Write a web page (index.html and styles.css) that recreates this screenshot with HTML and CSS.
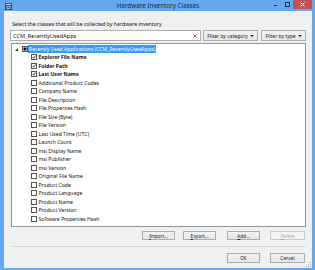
FILE: index.html
```html
<!DOCTYPE html>
<html>
<head>
<meta charset="utf-8">
<link rel="stylesheet" href="styles.css">
</head>
<body>
<div class="window">
  <div class="titlebar">
    <div class="tb-left">
      <svg class="appicon" width="7" height="7" viewBox="0 0 7 7"><rect x="0" y="0" width="7" height="7" fill="#2d4a86"/><rect x="1" y="1" width="5" height="1" fill="#cfe0ff"/><rect x="1.5" y="3" width="4" height="3" fill="#9fb8e8"/><rect x="2.5" y="4" width="2" height="1" fill="#2d4a86"/></svg>
    </div>
    <div class="title">Hardware Inventory Classes</div>
    <div class="controls">
      <span class="ctl min"><span class="min-bar"></span></span>
      <span class="ctl max"><span class="max-box"></span></span>
      <span class="ctl close"><svg width="5" height="5" viewBox="0 0 5 5"><path d="M0.5 0.5 L4.5 4.5 M4.5 0.5 L0.5 4.5" stroke="#fff" stroke-width="1"/></svg></span>
    </div>
  </div>
  <div class="content">
    <div class="prompt">Select the classes that will be collected by hardware inventory</div>
    <div class="searchrow">
      <div class="search">
        <span class="search-text">CCM_RecentlyUsedApps</span>
        <svg class="clear" width="4" height="4" viewBox="0 0 4 4"><path d="M0.3 0.3 L3.7 3.7 M3.7 0.3 L0.3 3.7" stroke="#d9302c" stroke-width="0.9"/></svg>
      </div>
      <div class="btn filter cat">Filter by category <span class="caret"></span></div>
      <div class="btn filter typ">Filter by type <span class="caret"></span></div>
    </div>
    <div class="tree">
      <div class="row root">
        <svg class="expander" width="3" height="3" viewBox="0 0 3 3"><polygon points="3,0 3,3 0,3" fill="#3c3c3c"/></svg>
        <span class="cb indet"></span>
        <span class="root-label">Recently Used Applications (CCM_RecentlyUsedApps)</span>
      </div>
      <div class="children">
        <div class="row child on"><span class="cb checked"><svg width="4" height="4" viewBox="0 0 4 4"><path d="M0.5 2 L1.6 3.2 L3.6 0.6" stroke="#222" stroke-width="0.9" fill="none"/></svg></span><span class="lbl">Explorer File Name</span></div>
        <div class="row child on"><span class="cb checked"><svg width="4" height="4" viewBox="0 0 4 4"><path d="M0.5 2 L1.6 3.2 L3.6 0.6" stroke="#222" stroke-width="0.9" fill="none"/></svg></span><span class="lbl">Folder Path</span></div>
        <div class="row child on"><span class="cb checked"><svg width="4" height="4" viewBox="0 0 4 4"><path d="M0.5 2 L1.6 3.2 L3.6 0.6" stroke="#222" stroke-width="0.9" fill="none"/></svg></span><span class="lbl">Last User Name</span></div>
        <div class="row child"><span class="cb"></span><span class="lbl">Additional Product Codes</span></div>
        <div class="row child"><span class="cb"></span><span class="lbl">Company Name</span></div>
        <div class="row child"><span class="cb"></span><span class="lbl">File Description</span></div>
        <div class="row child"><span class="cb"></span><span class="lbl">File Properties Hash</span></div>
        <div class="row child"><span class="cb"></span><span class="lbl">File Size (Byte)</span></div>
        <div class="row child"><span class="cb"></span><span class="lbl">File Version</span></div>
        <div class="row child"><span class="cb"></span><span class="lbl">Last Used Time (UTC)</span></div>
        <div class="row child"><span class="cb"></span><span class="lbl">Launch Count</span></div>
        <div class="row child"><span class="cb"></span><span class="lbl">msi Display Name</span></div>
        <div class="row child"><span class="cb"></span><span class="lbl">msi Publisher</span></div>
        <div class="row child"><span class="cb"></span><span class="lbl">msi Version</span></div>
        <div class="row child"><span class="cb"></span><span class="lbl">Original File Name</span></div>
        <div class="row child"><span class="cb"></span><span class="lbl">Product Code</span></div>
        <div class="row child"><span class="cb"></span><span class="lbl">Product Language</span></div>
        <div class="row child"><span class="cb"></span><span class="lbl">Product Name</span></div>
        <div class="row child"><span class="cb"></span><span class="lbl">Product Version</span></div>
        <div class="row child"><span class="cb"></span><span class="lbl">Software Properties Hash</span></div>
      </div>
    </div>
    <div class="actions">
      <div class="btn act import"><u>I</u>mport...</div>
      <div class="btn act export"><u>E</u>xport...</div>
      <div class="btn act add"><u>A</u>dd...</div>
      <div class="btn act delete disabled"><u>D</u>elete</div>
    </div>
    <div class="sep"></div>
    <div class="footer">
      <div class="btn act ok">OK</div>
      <div class="btn act cancel">Cancel</div>
    </div>
    <svg class="grip" width="5" height="5" viewBox="0 0 5 5"><g fill="#b8b8b8"><rect x="4" y="0" width="1" height="1"/><rect x="2" y="2" width="1" height="1"/><rect x="4" y="2" width="1" height="1"/><rect x="0" y="4" width="1" height="1"/><rect x="2" y="4" width="1" height="1"/><rect x="4" y="4" width="1" height="1"/></g></svg>
  </div>
</div>
</body>
</html>
```

FILE: styles.css
```css
html, body {
  margin: 0;
  padding: 0;
}
body {
  background: #ffffff;
  font-family: "Noto Sans", "Open Sans", sans-serif;
  color: #1a1a1a;
}
.window {
  width: 315px;
  height: 270px;
  box-sizing: border-box;
  background: #64a8f0;
  padding: 0 3px 2px 4px;
  display: flex;
  flex-direction: column;
}
.titlebar {
  height: 11px;
  display: grid;
  grid-template-columns: 1fr auto 1fr;
  align-items: start;
}
.tb-left {
  display: flex;
}
.appicon {
  display: block;
  margin: 3px 0 0 1px;
}
.title {
  font-size: 6.3px;
  line-height: 11px;
  color: #1e2a3a;
  white-space: nowrap;
}
.controls {
  display: flex;
  justify-content: flex-end;
  align-items: flex-start;
}
.ctl {
  display: flex;
  align-items: center;
  justify-content: center;
  height: 9px;
}
.min {
  width: 12px;
}
.min-bar {
  width: 3px;
  height: 1px;
  background: #1e2a3a;
  margin-top: 2px;
}
.max {
  width: 12px;
}
.max-box {
  width: 3px;
  height: 3px;
  border: 1px solid #1e2a3a;
}
.close {
  width: 19px;
  background: #c75050;
}
.close svg {
  display: block;
}
.content {
  flex: 1;
  background: #f0f0f0;
  padding: 10px 6px 0 6px;
  display: flex;
  flex-direction: column;
  position: relative;
}
.prompt {
  font-size: 5.2px;
  line-height: 7px;
  height: 7px;
  margin-left: 2px;
  white-space: nowrap;
  color: #111;
}
.searchrow {
  margin-top: 2px;
  height: 11px;
  display: flex;
  align-items: stretch;
}
.search {
  width: 191px;
  box-sizing: border-box;
  border: 1px solid #abadb3;
  background: #fff;
  display: flex;
  align-items: center;
  padding: 0 3px 0 2px;
  justify-content: space-between;
}
.search-text {
  font-size: 5.6px;
  white-space: nowrap;
  color: #111;
}
.clear {
  display: block;
}
.btn {
  box-sizing: border-box;
  border: 1px solid #adadad;
  background: linear-gradient(#f2f2f2, #e6e6e6);
  display: flex;
  align-items: center;
  justify-content: center;
  white-space: nowrap;
  color: #222;
}
.filter {
  font-size: 5px;
  height: 11px;
}
.filter.cat {
  width: 55px;
  margin-left: 2px;
}
.filter.typ {
  width: 45px;
  margin-left: 3px;
}
.caret {
  width: 0;
  height: 0;
  border-left: 2px solid transparent;
  border-right: 2px solid transparent;
  border-top: 2px solid #222;
  margin-left: 2px;
}
.tree {
  margin: 2px 0 0 1px;
  height: 184px;
  box-sizing: border-box;
  border: 1px solid #8e949c;
  background: #fff;
  padding-top: 0.5px;
}
.row {
  height: 8.5px;
  display: flex;
  align-items: center;
  white-space: nowrap;
}
.root {
  padding-left: 3px;
}
.expander {
  display: block;
  margin-top: 1px;
}
.cb {
  width: 6px;
  height: 6px;
  box-sizing: border-box;
  border: 1px solid #555;
  background: #fff;
  display: flex;
  align-items: center;
  justify-content: center;
  flex: none;
}
.cb svg {
  display: block;
}
.cb.indet {
  margin-left: 4px;
  background: #111;
  box-shadow: inset 0 0 0 0.5px #fff;
}
.root-label {
  background: #3399ff;
  color: #fff;
  font-size: 5.1px;
  line-height: 8px;
  padding: 0 1px;
}
.child {
  padding-left: 19px;
}
.lbl {
  font-size: 5.1px;
  margin-left: 1.5px;
  color: #111;
}
.child.on .lbl {
  font-weight: bold;
}
.actions {
  margin-top: 4px;
  height: 9px;
  display: flex;
  justify-content: flex-end;
}
.act {
  font-size: 4.6px;
  height: 9px;
  width: 33px;
}
.act u {
  text-decoration: underline;
  text-decoration-thickness: 0.4px;
}
.import { margin-right: 8px; }
.export { margin-right: 11px; }
.add { margin-right: 10px; }
.delete { width: 35px; margin-right: 1px; }
.disabled {
  color: #a8a8a8;
  border-color: #cacaca;
  background: #f4f4f4;
}
.sep {
  margin: 5.5px 0 0 2px;
  height: 1px;
  background: #d8d8d8;
}
.footer {
  margin-top: 6px;
  height: 10px;
  display: flex;
  justify-content: flex-end;
}
.footer .act {
  height: 10px;
}
.ok { margin-right: 10px; }
.cancel { width: 35px; margin-right: 1px; }
.grip {
  position: absolute;
  right: 1px;
  bottom: 1px;
  display: block;
}
```
